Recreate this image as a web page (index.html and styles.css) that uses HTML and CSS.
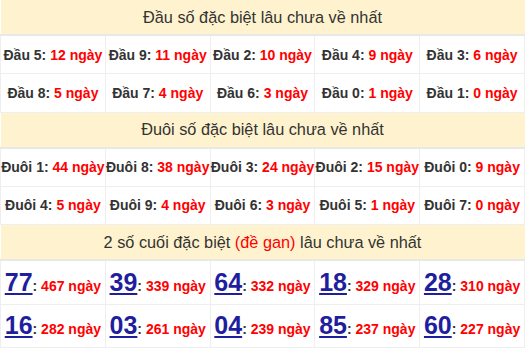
FILE: index.html
```html
<!DOCTYPE html>
<html lang="vi">
<head>
<meta charset="utf-8">
<title>Gan</title>
<link rel="stylesheet" href="styles.css">
</head>
<body>
<table class="gan">
  <tr><th colspan="5" class="head">Đầu số đặc biệt lâu chưa về nhất</th></tr>
  <tr>
    <td>Đầu 5: <span class="red">12 ngày</span></td>
    <td>Đầu 9: <span class="red">11 ngày</span></td>
    <td>Đầu 2: <span class="red">10 ngày</span></td>
    <td>Đầu 4: <span class="red">9 ngày</span></td>
    <td>Đầu 3: <span class="red">6 ngày</span></td>
  </tr>
  <tr>
    <td>Đầu 8: <span class="red">5 ngày</span></td>
    <td>Đầu 7: <span class="red">4 ngày</span></td>
    <td>Đầu 6: <span class="red">3 ngày</span></td>
    <td>Đầu 0: <span class="red">1 ngày</span></td>
    <td>Đầu 1: <span class="red">0 ngày</span></td>
  </tr>
  <tr><th colspan="5" class="head">Đuôi số đặc biệt lâu chưa về nhất</th></tr>
  <tr>
    <td>Đuôi 1: <span class="red">44 ngày</span></td>
    <td>Đuôi 8: <span class="red">38 ngày</span></td>
    <td>Đuôi 3: <span class="red">24 ngày</span></td>
    <td>Đuôi 2: <span class="red">15 ngày</span></td>
    <td>Đuôi 0: <span class="red">9 ngày</span></td>
  </tr>
  <tr>
    <td>Đuôi 4: <span class="red">5 ngày</span></td>
    <td>Đuôi 9: <span class="red">4 ngày</span></td>
    <td>Đuôi 6: <span class="red">3 ngày</span></td>
    <td>Đuôi 5: <span class="red">1 ngày</span></td>
    <td>Đuôi 7: <span class="red">0 ngày</span></td>
  </tr>
  <tr><th colspan="5" class="head">2 số cuối đặc biệt <span class="red-n">(đề gan)</span> lâu chưa về nhất</th></tr>
  <tr class="big">
    <td><a class="num">77</a>: <span class="red">467 ngày</span></td>
    <td><a class="num">39</a>: <span class="red">339 ngày</span></td>
    <td><a class="num">64</a>: <span class="red">332 ngày</span></td>
    <td><a class="num">18</a>: <span class="red">329 ngày</span></td>
    <td><a class="num">28</a>: <span class="red">310 ngày</span></td>
  </tr>
  <tr class="big">
    <td><a class="num">16</a>: <span class="red">282 ngày</span></td>
    <td><a class="num">03</a>: <span class="red">261 ngày</span></td>
    <td><a class="num">04</a>: <span class="red">239 ngày</span></td>
    <td><a class="num">85</a>: <span class="red">237 ngày</span></td>
    <td><a class="num">60</a>: <span class="red">227 ngày</span></td>
  </tr>
</table>
</body>
</html>
```

FILE: styles.css
```css
html, body {
  margin: 0;
  padding: 0;
  background: #fff;
}
body {
  font-family: "Liberation Sans", Arial, sans-serif;
  color: #333;
}
.gan {
  width: 525px;
  border-collapse: collapse;
  table-layout: fixed;
}
.gan td {
  width: 105px;
  height: 37.25px;
  padding: 0;
  border: 1px solid #eee;
  text-align: center;
  vertical-align: middle;
  font-size: 14px;
  font-weight: bold;
  white-space: nowrap;
  color: #333;
}
.gan .head {
  height: 34px;
  padding: 0;
  background: #fff3cf;
  border: none;
  border-bottom: 2px solid #e8e8e8;
  font-size: 16.3px;
  font-weight: normal;
  color: #333;
  text-align: center;
  vertical-align: middle;
}
.red { color: #f00; }
.red-n { color: #f00; }
.gan .big td {
  height: 42.5px;
}
.num {
  font-size: 25px;
  color: #1f1f9e;
  text-decoration: underline;
  text-underline-offset: 2px;
}
.big .red { font-size: 14px; }
```
